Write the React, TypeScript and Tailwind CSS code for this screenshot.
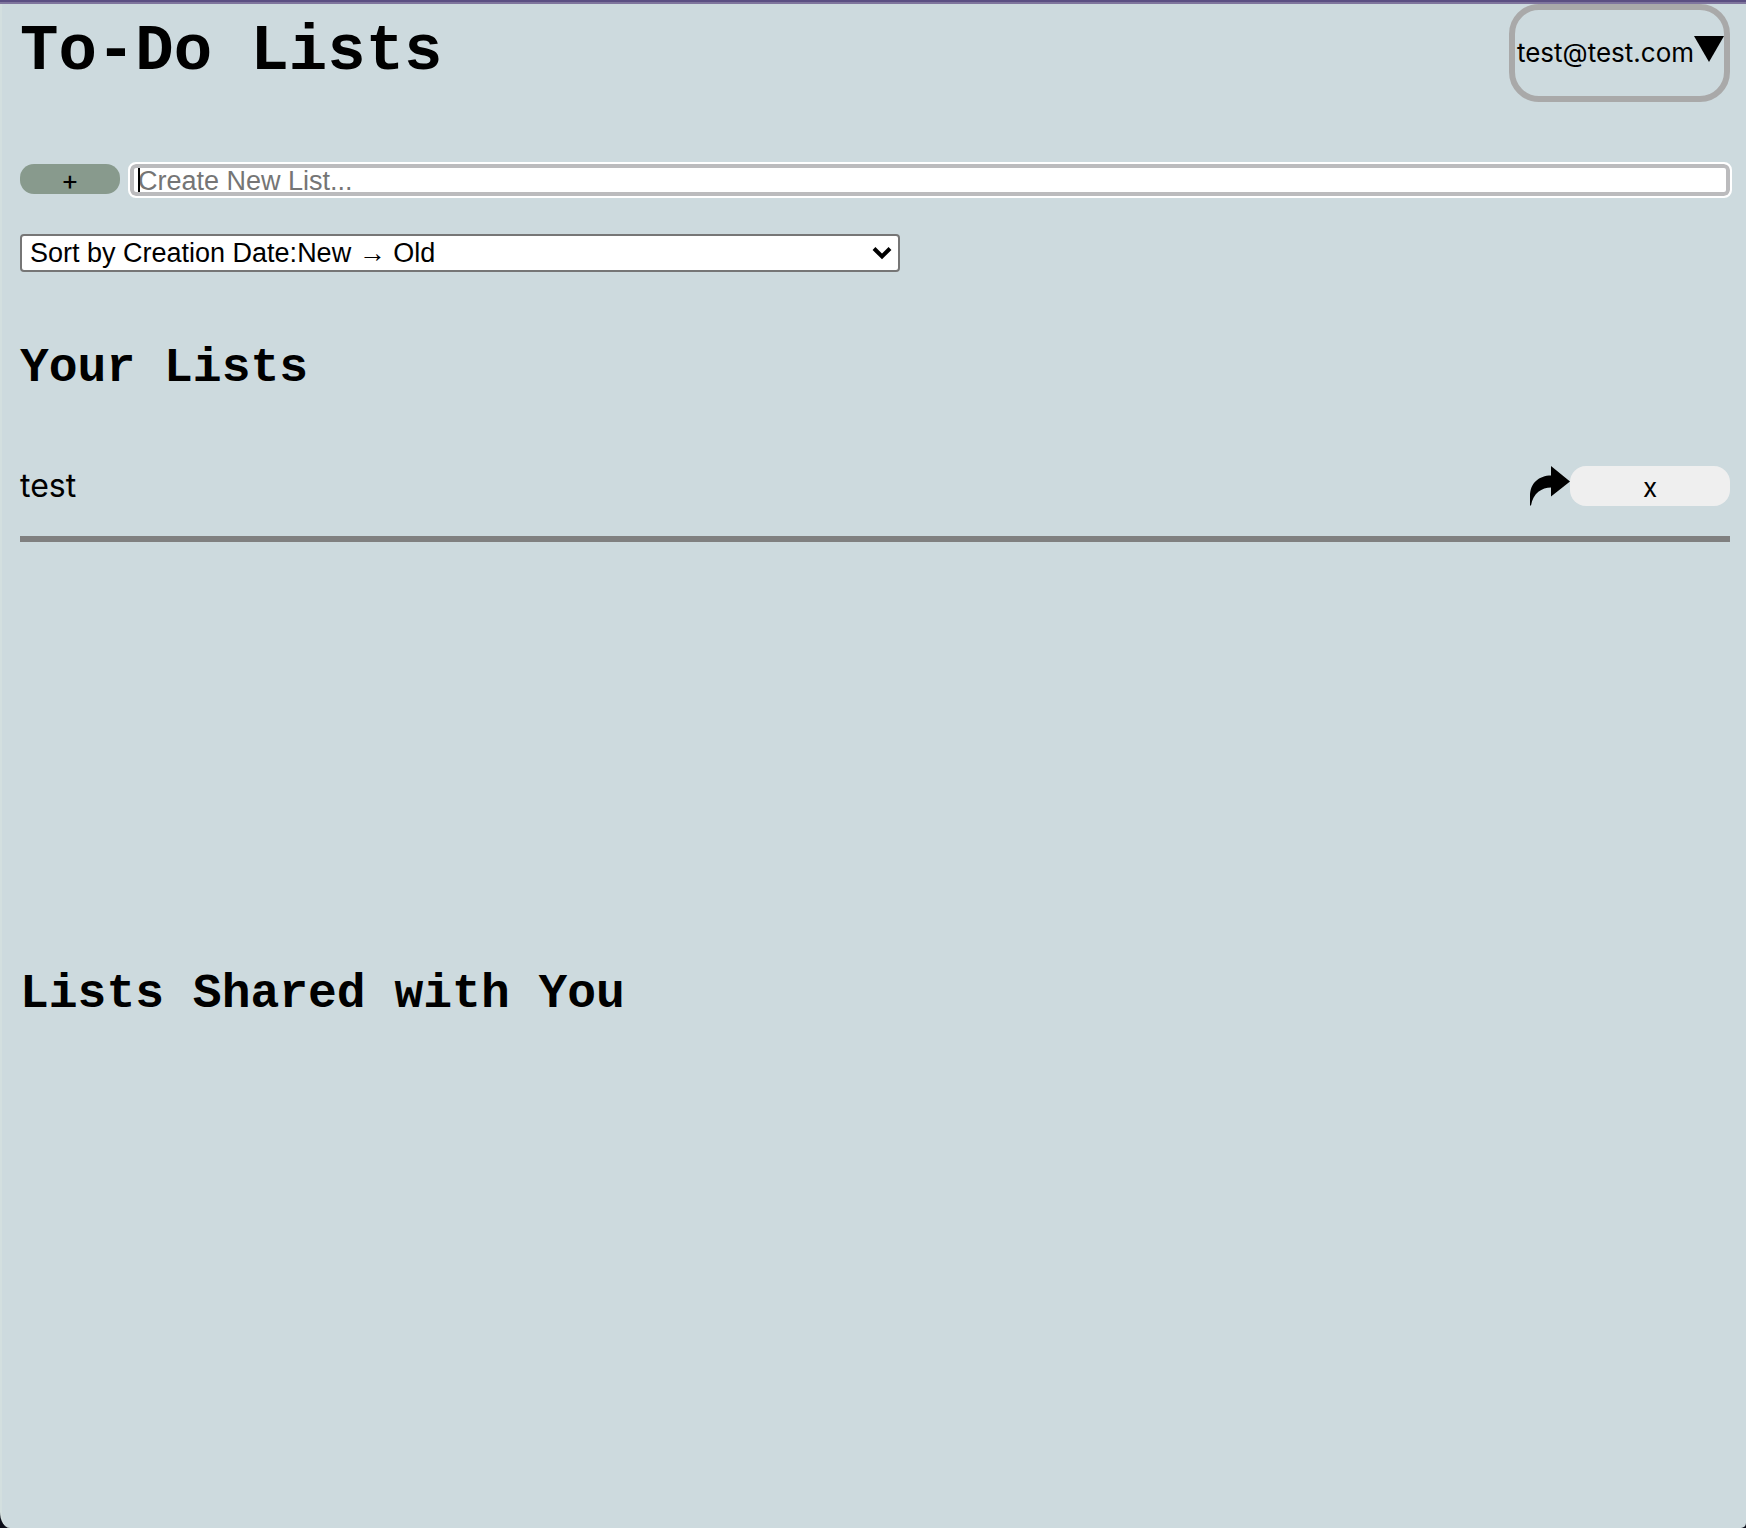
import { useState } from "react";

const headingFont = "font-['Liberation_Mono','Courier_New',monospace] font-bold";

function UserMenu({ email }: { email: string }) {
  return (
    <button
      type="button"
      className="flex h-[98px] shrink-0 items-center rounded-[30px] border-[6px] border-[#a9a9a9] pl-0.5 text-[26px] leading-8"
    >
      <span>{email}</span>
      <svg width="30" height="26" viewBox="0 0 30 26" className="mb-2" aria-hidden="true">
        <path d="M0 0H30L15 26Z" fill="#000" />
      </svg>
    </button>
  );
}

function CreateList() {
  const [name, setName] = useState("");
  return (
    <form className="mt-[60px] flex items-start gap-2" onSubmit={(e) => e.preventDefault()}>
      <button
        type="submit"
        aria-label="Create list"
        className="mt-0.5 h-[30px] w-[100px] shrink-0 rounded-[14px] bg-[#889a8d] pt-1 text-[27px] leading-[26px]"
      >
        +
      </button>
      <div className="relative -mr-0.5 min-w-0 flex-1">
        <input
          type="text"
          aria-label="New list name"
          placeholder="Create New List..."
          value={name}
          onChange={(e) => setName(e.target.value)}
          className="block h-9 w-full rounded-lg border-2 border-white bg-white px-2 pt-0.5 font-['Liberation_Sans',Arial,sans-serif] text-[27px] leading-[30px] shadow-[inset_0_0_0_4px_#bbbbbd] outline-none placeholder:text-[#757575]"
        />
        {name === "" && <span className="absolute top-1.5 left-2.5 h-6 w-0.5 bg-black" />}
      </div>
    </form>
  );
}

function SortSelect() {
  return (
    <div className="relative mt-9 w-[880px] max-w-full">
      <select
        aria-label="Sort lists"
        className="block h-[38px] w-full appearance-none rounded border-2 border-[#767676] bg-white px-2 font-['Liberation_Sans',Arial,sans-serif] text-[27px] leading-8 text-black"
      >
        <option>Sort by Creation Date:New → Old</option>
        <option>Sort by Creation Date:Old → New</option>
      </select>
      <svg
        width="20"
        height="14"
        viewBox="0 0 20 14"
        className="pointer-events-none absolute top-3 right-2"
        aria-hidden="true"
      >
        <path d="M2 2.5L10 10.5L18 2.5" fill="none" stroke="#000" strokeWidth="4" />
      </svg>
    </div>
  );
}

function ListItem({ name }: { name: string }) {
  return (
    <li className="flex items-center border-b-[6px] border-[#808080] pb-[30px]">
      <a href="#list" className="flex-1 text-[32px] leading-10">
        {name}
      </a>
      <button type="button" aria-label={`Share ${name}`} className="size-10">
        <svg width="40" height="40" viewBox="0 0 40 40" aria-hidden="true">
          <path
            d="M21 0L40 15.5L21 30.5V21.5C12 21.5 3 27 1 39.5H0V30C0 17 9 9.5 21 9.5Z"
            fill="#000"
          />
        </svg>
      </button>
      <button
        type="button"
        aria-label={`Delete ${name}`}
        className="h-10 w-40 rounded-2xl bg-[#efefef] pt-1 text-[26px] leading-9"
      >
        x
      </button>
    </li>
  );
}

export default function App() {
  return (
    <div className="min-h-screen bg-[#0b0d18]">
      <div className="flex min-h-screen flex-col rounded-br-[5px] rounded-bl-[10px_16px] border-l-2 border-[#d3dfdf] bg-[#cddade] font-[Inter,sans-serif] text-black">
        <div className="-ml-0.5 h-1 border-b-2 border-[#7f759d] bg-[#5b4f82]" />
        <div className="pr-4 pl-[18px]">
          <header className="flex items-start justify-between">
            <h1 className={`${headingFont} mt-3 text-[64px] leading-[72px]`}>To-Do Lists</h1>
            <UserMenu email="test@test.com" />
          </header>
          <CreateList />
          <SortSelect />
          <section className="mt-[68px] h-[626px]">
            <h2 className={`${headingFont} text-[48px] leading-[56px]`}>Your Lists</h2>
            <ul className="mt-[70px]">
              <ListItem name="test" />
            </ul>
          </section>
          <section>
            <h2 className={`${headingFont} text-[48px] leading-[56px]`}>Lists Shared with You</h2>
          </section>
        </div>
      </div>
    </div>
  );
}
